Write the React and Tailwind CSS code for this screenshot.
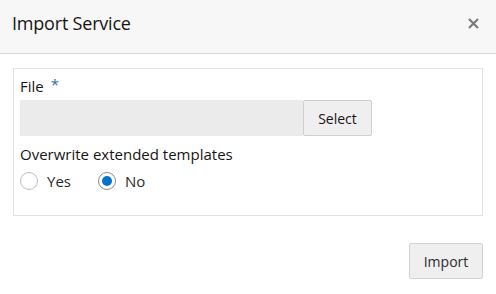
import React, { useState } from 'react';

function Radio({ label, checked, onChange }) {
  return (
    <label className="flex items-center gap-[9px] cursor-pointer" onClick={onChange}>
      <span
        className={
          'w-[18px] h-[18px] rounded-full border flex items-center justify-center bg-white ' +
          (checked ? 'border-[#8a8a8a]' : 'border-[#bdbdbd]')
        }
      >
        {checked && <span className="w-[10px] h-[10px] rounded-full bg-[#0572ce]"></span>}
      </span>
      <span className="text-[15px] text-[#2b2b2b]">{label}</span>
    </label>
  );
}

export default function App() {
  const [overwrite, setOverwrite] = useState('no');

  return (
    <div
      className="w-[496px] h-[294px] bg-white flex flex-col"
      style={{ fontFamily: '"Open Sans", "Noto Sans", sans-serif' }}
    >
      <div className="h-[54px] bg-[#f7f7f7] border-b border-[#d6d6d6] flex items-center justify-between pl-3 pr-[16px] pb-[7px]">
        <h1 className="text-[18px] text-[#161513] tracking-[-0.2px]">Import Service</h1>
        <button className="text-[#7a7a7a] w-[14px] h-[14px] flex items-center justify-center">
          <svg width="11" height="11" viewBox="0 0 11 11">
            <path d="M1 1L10 10M10 1L1 10" stroke="currentColor" strokeWidth="2.2" />
          </svg>
        </button>
      </div>

      <div className="px-[13px] pt-[14px]">
        <div className="h-[148px] border border-[#e2e2e2] px-[6px] pt-[6px]">
          <div className="flex items-start h-[22px]">
            <span className="text-[15px] text-[#161513] leading-[22px]">File</span>
            <span className="text-[15px] text-[#3c6bb0] ml-[7px] leading-[18px]">*</span>
          </div>
          <div className="flex mt-[3px] h-[36px]">
            <div className="w-[283px] bg-[#ebebeb]"></div>
            <button className="w-[69px] bg-[#efefef] border border-[#cfcfcf] rounded-[2px] text-[14px] text-[#161513]">
              Select
            </button>
          </div>
          <div className="mt-[7px] text-[15px] text-[#161513] leading-[22px]">Overwrite extended templates</div>
          <div className="flex items-center gap-[27px] mt-[4px] h-[24px]">
            <Radio label="Yes" checked={overwrite === 'yes'} onChange={() => setOverwrite('yes')} />
            <Radio label="No" checked={overwrite === 'no'} onChange={() => setOverwrite('no')} />
          </div>
        </div>
      </div>

      <div className="flex justify-end px-[13px] mt-[27px]">
        <button className="w-[74px] h-[36px] bg-[#efefef] border border-[#d3d3d3] rounded-[2px] text-[14px] text-[#2b2b2b]">
          Import
        </button>
      </div>
    </div>
  );
}
